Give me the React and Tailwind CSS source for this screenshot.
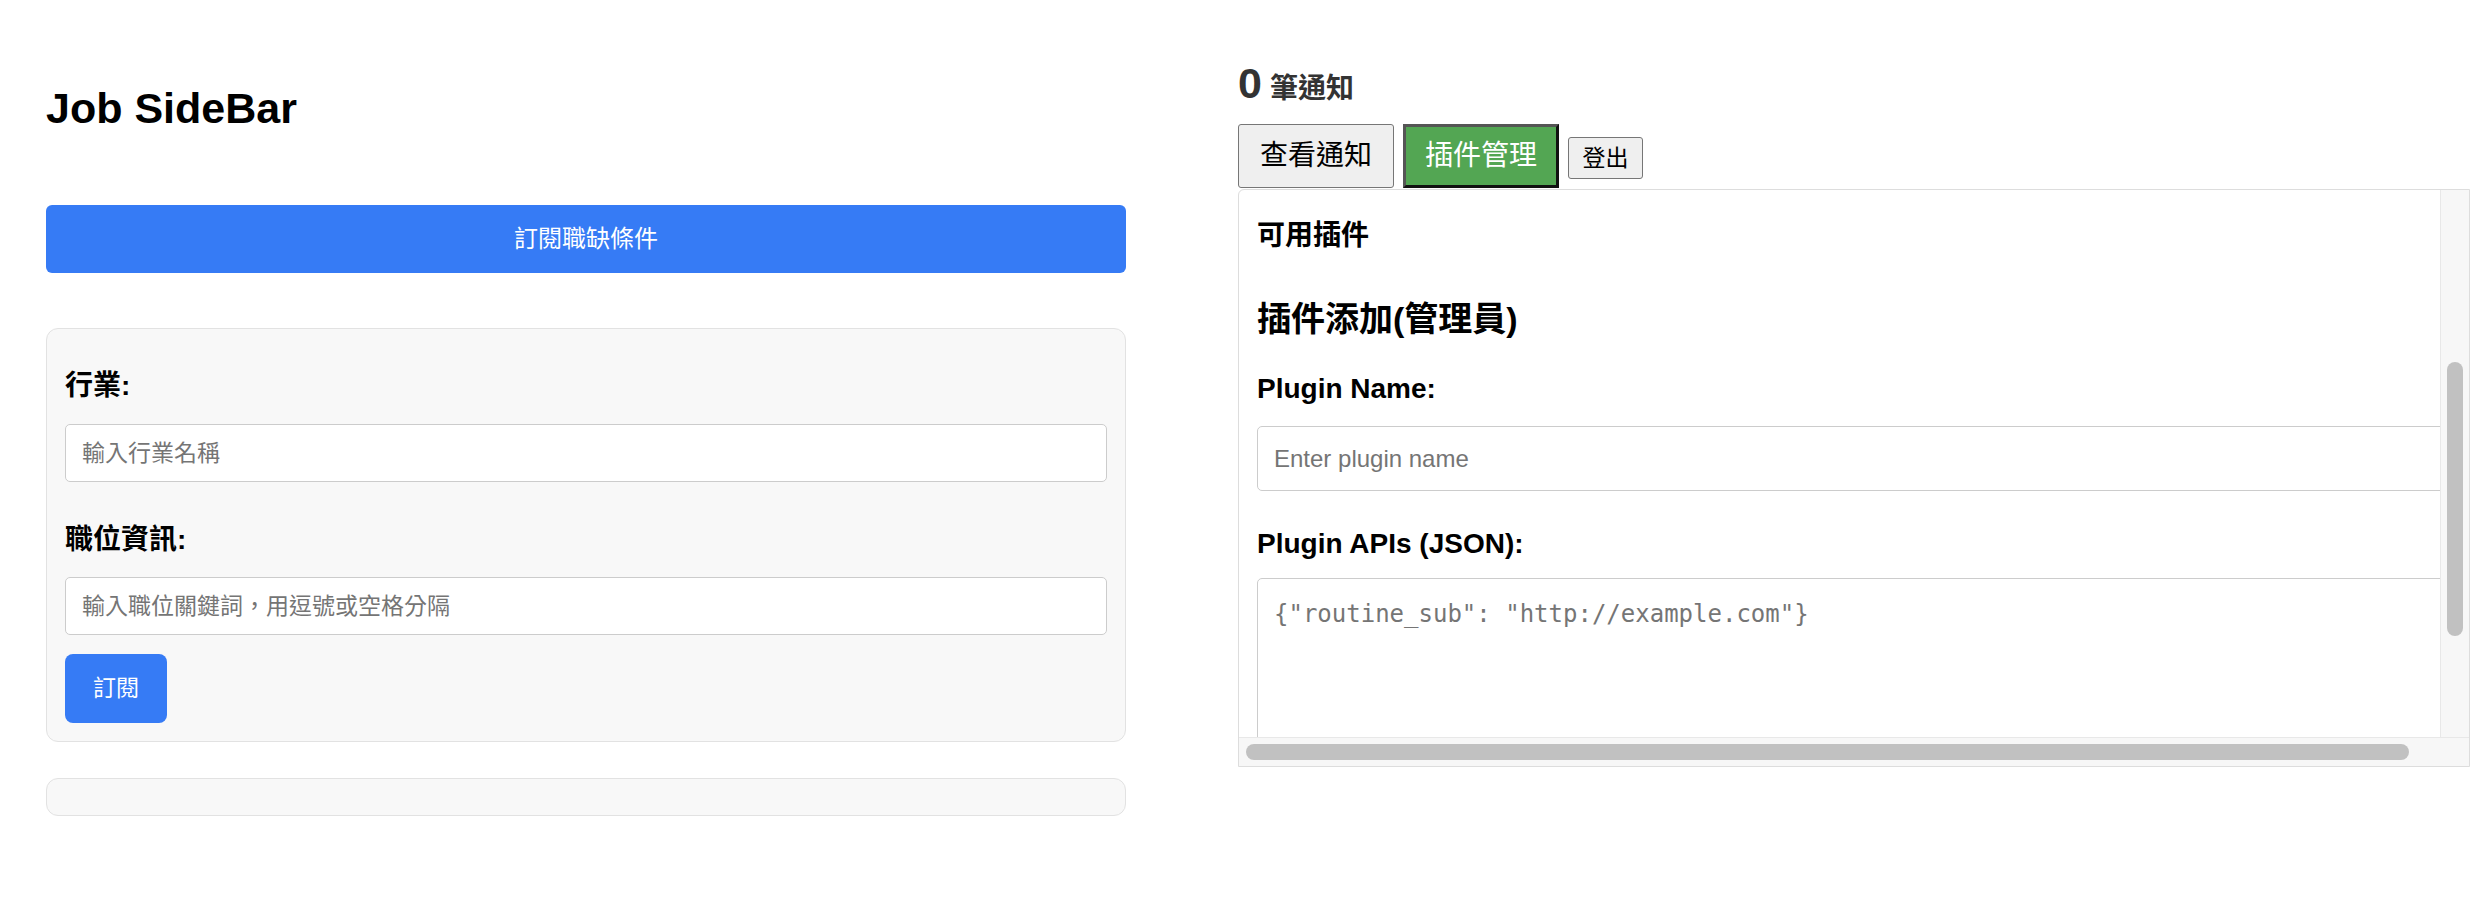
import React from 'react';

const inputCls =
  'block w-full rounded-[5px] border border-[#cccccc] bg-white px-[16px] text-[23px] text-black outline-none placeholder:text-[#757575]';

const LeftColumn = () => (
  <div className="ml-[46px] w-[1080px] shrink-0">
    <h1 className="mt-[84px] text-[43px] font-bold leading-[48px]">Job SideBar</h1>

    <button className="mt-[73px] flex h-[68px] w-full items-center justify-center rounded-[6px] bg-[#367bf5] text-[24px] text-white">
      訂閱職缺條件
    </button>

    {/* 訂閱表單 */}
    <div className="mt-[55px] rounded-[12px] border border-[#e2e2e2] bg-[#f8f8f8] px-[18px] pt-[41px] pb-[18px]">
      <label className="block text-[28px] font-bold leading-[32px]">行業:</label>
      <input className={`mt-[22px] h-[58px] ${inputCls}`} placeholder="輸入行業名稱" />

      <label className="mt-[42px] block text-[28px] font-bold leading-[32px]">職位資訊:</label>
      <input className={`mt-[21px] h-[58px] ${inputCls}`} placeholder="輸入職位關鍵詞，用逗號或空格分隔" />

      <button className="mt-[19px] flex h-[69px] w-[102px] items-center justify-center rounded-[8px] bg-[#367bf5] text-[23px] text-white">
        訂閱
      </button>
    </div>

    <div className="mt-[36px] h-[38px] rounded-[12px] border border-[#e2e2e2] bg-[#f8f8f8]" />
  </div>
);

const PluginPanel = () => (
  <div className="mt-[1px] flex h-[578px] flex-col overflow-hidden rounded-tl-[6px] border border-[#dddddd] bg-white">
    <div className="flex min-h-0 flex-1">
      <div className="min-w-0 flex-1 overflow-hidden pl-[18px] pt-[29px]">
        <h4 className="text-[28px] font-bold leading-[34px]">可用插件</h4>
        <h3 className="mt-[46px] text-[34px] font-bold leading-[40px]">插件添加(管理員)</h3>

        <label className="mt-[34px] block text-[28px] font-bold leading-[32px]">Plugin Name:</label>
        <input
          className="mt-[21px] block h-[65px] w-[1200px] rounded-[5px] border border-[#cccccc] bg-white px-[16px] text-[24px] outline-none placeholder:text-[#757575]"
          placeholder="Enter plugin name"
        />

        <label className="mt-[37px] block text-[28px] font-bold leading-[32px]">Plugin APIs (JSON):</label>
        <textarea
          className="mt-[18px] block h-[220px] w-[1200px] resize-none rounded-[5px] border border-[#cccccc] bg-white px-[16px] pt-[17px] font-['DejaVu_Sans_Mono',monospace] text-[24px] outline-none placeholder:text-[#757575]"
          placeholder='{"routine_sub": "http://example.com"}'
        />
      </div>

      {/* 垂直捲軸 */}
      <div className="w-[29px] shrink-0 border-l border-[#e8e8e8] bg-[#f7f7f7] pl-[6px] pt-[172px]">
        <div className="h-[274px] w-[16px] rounded-full bg-[#c1c1c1]" />
      </div>
    </div>

    {/* 水平捲軸 */}
    <div className="h-[29px] shrink-0 border-t border-[#e8e8e8] bg-[#f7f7f7] pl-[7px] pt-[6px]">
      <div className="h-[16px] w-[1163px] rounded-full bg-[#c1c1c1]" />
    </div>
  </div>
);

const RightColumn = () => (
  <div className="ml-[112px] w-[1232px] shrink-0">
    <div className="mt-[59px] flex items-baseline font-bold text-[#333333]">
      <span className="text-[43px] leading-[48px]">0</span>
      <span className="ml-[8px] text-[28px] leading-[34px]">筆通知</span>
    </div>

    <div className="mt-[17px] flex items-start gap-[9px]">
      <button className="flex h-[64px] w-[156px] items-center justify-center rounded-[3px] border border-[#767676] bg-[#efefef] text-[28px] text-black">
        查看通知
      </button>
      <button className="flex h-[64px] w-[156px] items-center justify-center border-[3px] border-t-[#555555] border-l-[#555555] border-r-[#111111] border-b-[#111111] bg-[#53a653] text-[28px] text-white">
        插件管理
      </button>
      <button className="mt-[13px] flex h-[42px] w-[75px] items-center justify-center rounded-[3px] border border-[#767676] bg-[#efefef] text-[23px] text-black">
        登出
      </button>
    </div>

    <PluginPanel />
  </div>
);

const App = () => {
  return (
    <div className="flex min-h-screen w-[2470px] overflow-hidden bg-white font-['Liberation_Sans','Noto_Sans_CJK_TC',sans-serif] text-black">
      <LeftColumn />
      <RightColumn />
    </div>
  );
};

export default App;
